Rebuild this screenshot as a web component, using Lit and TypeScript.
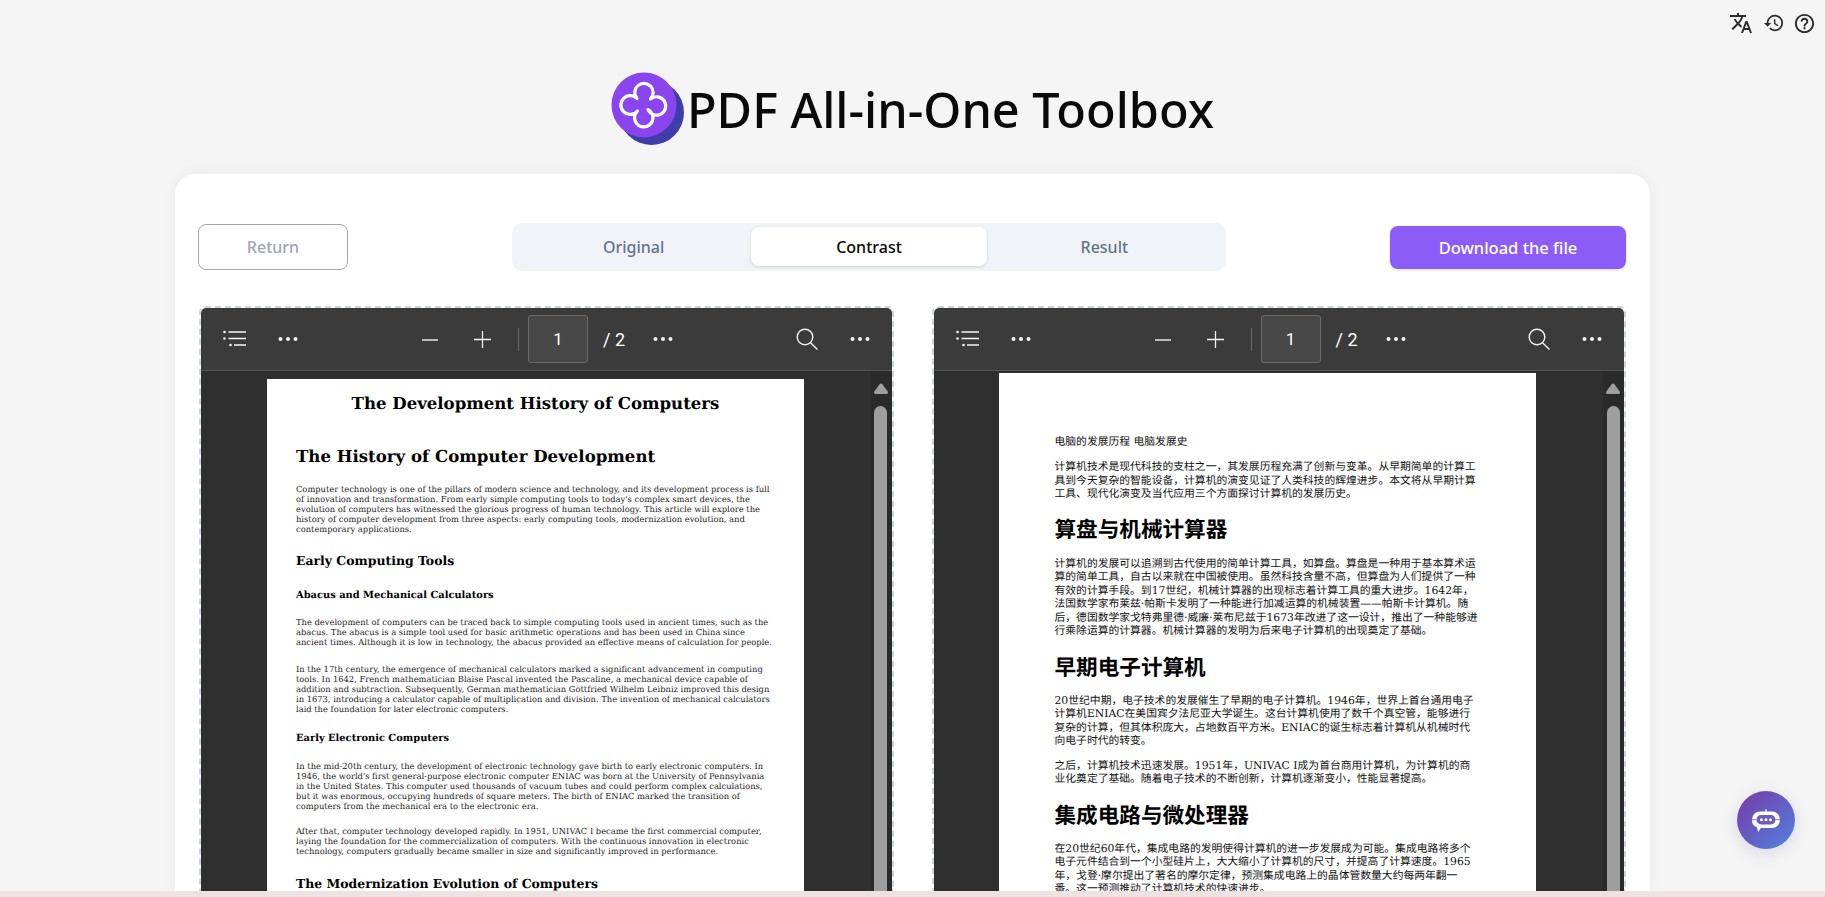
import { LitElement, html, css } from "lit";
import { customElement } from "lit/decorators.js";

type Block = { k: string; m: number; lines: string[] };

const leftDoc: Block[] = [
  { k: "title", m: 13.2, lines: ["The Development History of Computers"] },
  { k: "h1", m: 31, lines: ["The History of Computer Development"] },
  { k: "p", m: 18, lines: [
    "Computer technology is one of the pillars of modern science and technology, and its development process is full",
    "of innovation and transformation. From early simple computing tools to today's complex smart devices, the",
    "evolution of computers has witnessed the glorious progress of human technology. This article will explore the",
    "history of computer development from three aspects: early computing tools, modernization evolution, and",
    "contemporary applications."] },
  { k: "h2", m: 18.5, lines: ["Early Computing Tools"] },
  { k: "h3", m: 21.6, lines: ["Abacus and Mechanical Calculators"] },
  { k: "p", m: 17.4, lines: [
    "The development of computers can be traced back to simple computing tools used in ancient times, such as the",
    "abacus. The abacus is a simple tool used for basic arithmetic operations and has been used in China since",
    "ancient times. Although it is low in technology, the abacus provided an effective means of calculation for people."] },
  { k: "p", m: 17.3, lines: [
    "In the 17th century, the emergence of mechanical calculators marked a significant advancement in computing",
    "tools. In 1642, French mathematician Blaise Pascal invented the Pascaline, a mechanical device capable of",
    "addition and subtraction. Subsequently, German mathematician Gottfried Wilhelm Leibniz improved this design",
    "in 1673, introducing a calculator capable of multiplication and division. The invention of mechanical calculators",
    "laid the foundation for later electronic computers."] },
  { k: "h3", m: 17.1, lines: ["Early Electronic Computers"] },
  { k: "p", m: 18.4, lines: [
    "In the mid-20th century, the development of electronic technology gave birth to early electronic computers. In",
    "1946, the world's first general-purpose electronic computer ENIAC was born at the University of Pennsylvania",
    "in the United States. This computer used thousands of vacuum tubes and could perform complex calculations,",
    "but it was enormous, occupying hundreds of square meters. The birth of ENIAC marked the transition of",
    "computers from the mechanical era to the electronic era."] },
  { k: "p", m: 15.5, lines: [
    "After that, computer technology developed rapidly. In 1951, UNIVAC I became the first commercial computer,",
    "laying the foundation for the commercialization of computers. With the continuous innovation in electronic",
    "technology, computers gradually became smaller in size and significantly improved in performance."] },
  { k: "h2", m: 19, lines: ["The Modernization Evolution of Computers"] },
];

const rightDoc: Block[] = [
  { k: "zp", m: 62, lines: ["电脑的发展历程 电脑发展史"] },
  { k: "zp", m: 11.5, lines: [
    "计算机技术是现代科技的支柱之一，其发展历程充满了创新与变革。从早期简单的计算工",
    "具到今天复杂的智能设备，计算机的演变见证了人类科技的辉煌进步。本文将从早期计算",
    "工具、现代化演变及当代应用三个方面探讨计算机的发展历史。"] },
  { k: "zh", m: 15, lines: ["算盘与机械计算器"] },
  { k: "zp", m: 15, lines: [
    "计算机的发展可以追溯到古代使用的简单计算工具，如算盘。算盘是一种用于基本算术运",
    "算的简单工具，自古以来就在中国被使用。虽然科技含量不高，但算盘为人们提供了一种",
    "有效的计算手段。到17世纪，机械计算器的出现标志着计算工具的重大进步。1642年，",
    "法国数学家布莱兹·帕斯卡发明了一种能进行加减运算的机械装置——帕斯卡计算机。随",
    "后，德国数学家戈特弗里德·威廉·莱布尼兹于1673年改进了这一设计，推出了一种能够进",
    "行乘除运算的计算器。机械计算器的发明为后来电子计算机的出现奠定了基础。"] },
  { k: "zh", m: 16, lines: ["早期电子计算机"] },
  { k: "zp", m: 14, lines: [
    "20世纪中期，电子技术的发展催生了早期的电子计算机。1946年，世界上首台通用电子",
    "计算机ENIAC在美国宾夕法尼亚大学诞生。这台计算机使用了数千个真空管，能够进行",
    "复杂的计算，但其体积庞大，占地数百平方米。ENIAC的诞生标志着计算机从机械时代",
    "向电子时代的转变。"] },
  { k: "zp", m: 11, lines: [
    "之后，计算机技术迅速发展。1951年，UNIVAC I成为首台商用计算机，为计算机的商",
    "业化奠定了基础。随着电子技术的不断创新，计算机逐渐变小，性能显著提高。"] },
  { k: "zh", m: 16, lines: ["集成电路与微处理器"] },
  { k: "zp", m: 14, lines: [
    "在20世纪60年代，集成电路的发明使得计算机的进一步发展成为可能。集成电路将多个",
    "电子元件结合到一个小型硅片上，大大缩小了计算机的尺寸，并提高了计算速度。1965",
    "年，戈登·摩尔提出了著名的摩尔定律，预测集成电路上的晶体管数量大约每两年翻一",
    "番。这一预测推动了计算机技术的快速进步。"] },
];

const dots = html`<svg class="dots" width="20" height="6" viewBox="0 0 20 6"><circle cx="2.5" cy="3" r="2" /><circle cx="10" cy="3" r="2" /><circle cx="17.5" cy="3" r="2" /></svg>`;

@customElement("app-root")
export class AppRoot extends LitElement {
  static styles = css`
    :host {
      display: flex;
      flex-direction: column;
      height: 100vh;
      overflow: hidden;
      background: #f5f5f5;
      font-family: "Noto Sans", "Noto Sans CJK SC", sans-serif;
    }
    .main { flex: 1; min-height: 0; display: flex; flex-direction: column; overflow: hidden; }
    .strip { height: 6px; flex: none; background: #efe2e2; }
    .top { display: flex; justify-content: flex-end; align-items: center; gap: 8px; padding: 11px 9px 0 0; height: 24px; flex: none; color: #222; }
    .top svg { display: block; fill: #2b2b2b; }
    .top svg:first-child { margin-right: 2px; }
    .brand { display: flex; justify-content: center; align-items: center; gap: 2px; margin-top: 37px; height: 74px; flex: none; }
    .brand h1 { margin: 0; font-size: 48.6px; font-weight: 500; color: #0a0a0a; line-height: 74px; letter-spacing: 0; }
    .card { flex: 1; min-height: 0; margin: 28px 175px 0; padding: 49px 25px 0; background: #fff; border-radius: 20px 20px 0 0; box-shadow: 0 0 14px rgba(0,0,0,.05); display: flex; flex-direction: column; overflow: hidden; }
    .actions { display: flex; justify-content: space-between; align-items: center; flex: none; height: 48px; margin: 0 -1px 0 -2px; }
    .btn { box-sizing: border-box; display: flex; justify-content: center; align-items: center; font-size: 16px; font-weight: 500; border-radius: 8px; }
    .return { width: 150px; height: 46px; border: 1px solid #a3a7b4; color: #a0a4b0; background: #fff; }
    .download { width: 236px; height: 43px; font-size: 16.5px; color: #fff; background: #8b5cf6; box-shadow: 0 1px 3px rgba(0,0,0,.15); }
    .tabs { box-sizing: border-box; display: grid; grid-template-columns: repeat(3, 1fr); width: 714px; height: 48px; padding: 4px; background: #f0f3f8; border-radius: 10px; }
    .tab { display: flex; justify-content: center; align-items: center; font-size: 16px; font-weight: 500; color: #64748b; border-radius: 8px; height: 39px; }
    .tab.on { color: #0a0a0a; background: #fff; box-shadow: 0 1px 3px rgba(0,0,0,.14); }
    .panels { flex: 1; min-height: 0; display: grid; grid-template-columns: 1fr 1fr; gap: 40px; margin-top: 36px; }
    .panel { margin: -1px -1px 0; border: 2px dashed #cbd5e1; border-bottom: none; border-radius: 6px 6px 0 0; display: flex; flex-direction: column; overflow: hidden; min-height: 0; }
    .bar { flex: none; box-sizing: border-box; height: 63px; background: #3b3b3b; border-bottom: 1px solid #545454; border-radius: 5px 5px 0 0; display: flex; align-items: center; padding: 0 22px 0 22px; }
    .bar svg { display: block; flex: none; }
    .dots { fill: #f2f2f2; }
    .g1 { display: flex; align-items: center; gap: 32px; width: 199px; flex: none; }
    .g2 { display: flex; align-items: center; flex: none; }
    .g3 { display: flex; align-items: center; gap: 31px; margin-left: auto; flex: none; }
    .sep { width: 1px; height: 23px; background: #6a6a6a; margin: 0 9px 0 27px; flex: none; }
    .num { box-sizing: border-box; width: 60px; height: 48px; border: 1px solid #6b6b6b; border-radius: 3px; background: #484848; display: flex; align-items: center; justify-content: center; color: #fff; font-size: 17px; font-family: "Roboto", sans-serif; font-weight: 400; }
    .total { color: #fff; font-size: 18px; font-family: "Roboto", sans-serif; font-weight: 400; margin: 0 28px 0 15px; white-space: pre; }
    .plus { margin-left: 35px; }
    .view { flex: 1; min-height: 0; background: #2f2f2f; display: flex; overflow: hidden; }
    .view.a { padding: 8px 0 0 66px; }
    .view.b { padding: 2px 0 0 65px; }
    .page { width: 537px; flex: none; background: #fff; color: #000; overflow: hidden; box-sizing: border-box; text-rendering: geometricPrecision; }
    .a .page { padding-left: 29px; }
    .b .page { padding-left: 56px; }
    .ln { white-space: pre; }
    .p { font: 400 8.33px/9.9px "DejaVu Serif", serif; color: #1c1c1c; }
    .title, .h1, .h2, .h3 { padding-top: 1.1px; margin-bottom: -1.1px; }
    .title { font: 700 16.57px/20px "DejaVu Serif", serif; text-align: center; margin-left: -29px; }
    .h1 { font: 700 16.6px/24px "DejaVu Serif", serif; }
    .h2 { font: 700 12.45px/14px "DejaVu Serif", serif; }
    .h3 { font: 700 9.9px/12px "DejaVu Serif", serif; }
    .zp { font: 400 10.8px/13.5px "DejaVu Serif", "Noto Sans CJK SC", serif; color: #111; }
    .zh { font: 700 21.6px/26px "DejaVu Serif", "Noto Sans CJK SC", serif; padding-top: 2.5px; margin-bottom: -2.5px; }
    .track { margin-left: auto; width: 21px; flex: none; background: #2a2a2a; display: flex; flex-direction: column; align-items: center; padding-top: 12px; box-sizing: border-box; }
    .a .track { margin-top: -8px; }
    .b .track { margin-top: -2px; }
    .thumb { width: 13px; flex: 1; margin-top: 12px; background: #9e9e9e; border-radius: 6.5px 6.5px 0 0; margin-right: 1px; }
    .tri { display: block; margin-right: 1px; }
    .bot { position: fixed; left: 1737px; top: 791px; width: 58px; height: 58px; border-radius: 50%; background: linear-gradient(135deg, #7a3aa6, #4f82e0); box-shadow: 0 4px 16px rgba(80,90,160,.18); display: flex; align-items: center; justify-content: center; }
    .bot svg { display: block; margin-top: 4.5px; }
  `;

  private doc(blocks: Block[]) {
    return blocks.map(
      (b) => html`<div class=${b.k} style="margin-top:${b.m}px">${b.lines.map((l) => html`<div class="ln">${l}</div>`)}</div>`
    );
  }

  private panel(cls: string, blocks: Block[]) {
    return html`<section class="panel">
      <div class="bar">
        <div class="g1">
          <svg width="23" height="18" viewBox="0 0 23 18" fill="#f6f6f6" stroke="#f6f6f6">
            <circle cx="1.5" cy="2" r="1.3" stroke="none" /><circle cx="1.5" cy="8.5" r="1.3" stroke="none" /><circle cx="7.5" cy="15" r="1.3" stroke="none" />
            <path d="M5.5 2H23M5.5 8.5H23M11 15H23" stroke-width="1.4" fill="none" />
          </svg>
          ${dots}
        </div>
        <div class="g2">
          <svg width="17" height="17" viewBox="0 0 17 17"><path d="M0 9h16" stroke="#e8e8e8" stroke-width="1.6" /></svg>
          <svg class="plus" width="17" height="17" viewBox="0 0 17 17"><path d="M0 8.5h17M8.5 0v17" stroke="#f2f2f2" stroke-width="1.3" /></svg>
          <div class="sep"></div>
          <div class="num">1</div>
          <div class="total">/ 2</div>
          ${dots}
        </div>
        <div class="g3">
          <svg width="23" height="22" viewBox="0 0 23 22" fill="none" stroke="#f2f2f2" stroke-width="1.4"><circle cx="9" cy="9" r="7.8" /><path d="M14.5 14.8L21.5 21.5" /></svg>
          ${dots}
        </div>
      </div>
      <div class="view ${cls}">
        <div class="page">${this.doc(blocks)}</div>
        <div class="track">
          <svg class="tri" width="14" height="11" viewBox="0 0 14 11"><path d="M7 2L12.5 9.5H1.5Z" fill="#9e9e9e" stroke="#9e9e9e" stroke-width="3" stroke-linejoin="round" /></svg>
          <div class="thumb"></div>
        </div>
      </div>
    </section>`;
  }

  render() {
    return html`
      <div class="main">
        <div class="top">
          <svg width="24" height="24" viewBox="0 0 24 24"><path d="M12.87 15.07l-2.54-2.51.03-.03c1.74-1.94 2.98-4.17 3.71-6.53H17V4h-7V2H8v2H1v1.99h11.17C11.5 7.92 10.44 9.75 9 11.35 8.07 10.32 7.3 9.19 6.69 8h-2c.73 1.63 1.73 3.17 2.98 4.56l-5.09 5.02L4 19l5-5 3.11 3.11.76-2.04zM18.5 10h-2L12 22h2l1.12-3h4.75L21 22h2l-4.5-12zm-2.62 7l1.62-4.33L19.12 17h-3.24z" /></svg>
          <svg width="22" height="22" viewBox="0 0 24 24"><path d="M13 3a9 9 0 0 0-9 9H1l3.89 3.89.07.14L9 12H6c0-3.87 3.13-7 7-7s7 3.13 7 7-3.13 7-7 7c-1.93 0-3.68-.79-4.94-2.06l-1.42 1.42A8.954 8.954 0 0 0 13 21a9 9 0 0 0 0-18zm-1 5v5l4.28 2.54.72-1.21-3.5-2.08V8H12z" /></svg>
          <svg width="23" height="23" viewBox="0 0 24 24"><path d="M11 18h2v-2h-2v2zm1-16C6.48 2 2 6.48 2 12s4.48 10 10 10 10-4.48 10-10S17.52 2 12 2zm0 18c-4.41 0-8-3.59-8-8s3.59-8 8-8 8 3.59 8 8-3.59 8-8 8zm0-14c-2.21 0-4 1.79-4 4h2c0-1.1.9-2 2-2s2 .9 2 2c0 2-3 1.75-3 5h2c0-2.25 3-2.5 3-5 0-2.21-1.79-4-4-4z" /></svg>
        </div>
        <div class="brand">
          <svg width="74" height="74" viewBox="0 0 74 74">
            <circle cx="40.5" cy="40.5" r="32.5" fill="#3f3da8" />
            <circle cx="33" cy="33" r="32.5" fill="#8b45ee" />
            <path d="M26 26.5A9.2 9.2 0 1 1 39.5 27A9.2 9.2 0 1 1 37 37.5L39.5 39.5A9.2 9.2 0 1 1 26.5 39A9.4 9.4 0 1 1 26 26.5Z" fill="none" stroke="#fff" stroke-width="3.2" stroke-linejoin="round" />
          </svg>
          <h1>PDF All-in-One Toolbox</h1>
        </div>
        <div class="card">
          <div class="actions">
            <div class="btn return">Return</div>
            <div class="tabs">
              <div class="tab">Original</div>
              <div class="tab on">Contrast</div>
              <div class="tab">Result</div>
            </div>
            <div class="btn download">Download the file</div>
          </div>
          <div class="panels">
            ${this.panel("a", leftDoc)}
            ${this.panel("b", rightDoc)}
          </div>
        </div>
      </div>
      <div class="strip"></div>
      <div class="bot">
        <svg width="32" height="26" viewBox="0 0 32 26">
          <path d="M10 2.5H22A8 8 0 0 1 30 10.5V11A8 8 0 0 1 22 19H11L8 23L7 18.5A8 8 0 0 1 2 11V10.5A8 8 0 0 1 10 2.5Z" fill="#fff" />
          <path d="M16 0.5V2.5" stroke="#fff" stroke-width="1.6" />
          <rect x="6.5" y="6" width="19" height="9.5" rx="4.7" fill="#6a5cb8" />
          <path d="M2 10.7H6.5M25.5 10.7H30" stroke="#6a5cb8" stroke-width="0.8" />
          <circle cx="11.5" cy="10.7" r="1.5" fill="#fff" /><circle cx="16" cy="10.7" r="1.5" fill="#fff" /><circle cx="20.5" cy="10.7" r="1.5" fill="#fff" />
        </svg>
      </div>
    `;
  }
}
